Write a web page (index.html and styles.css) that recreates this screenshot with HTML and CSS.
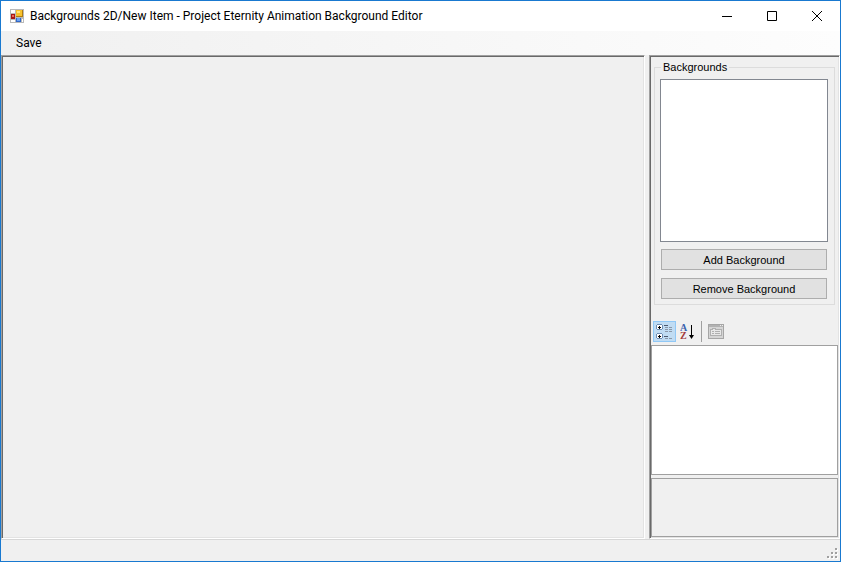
FILE: index.html
```html
<!DOCTYPE html>
<html lang="en">
<head>
<meta charset="utf-8">
<title>Backgrounds 2D/New Item - Project Eternity Animation Background Editor</title>
<link rel="stylesheet" href="styles.css">
</head>
<body>
<div class="window">
  <header class="titlebar">
    <svg class="app-icon" width="14" height="14" viewBox="0 0 14 14" shape-rendering="crispEdges" aria-hidden="true">
      <rect width="14" height="14" fill="#b9b9b9"/>
      <path fill="#fff" d="M1 1h4v3H1zM1 11h4v2H1zM12 10h1v3h-1z"/>
      <rect x="6" y="1" width="7" height="7" fill="#b07c10"/>
      <rect x="6" y="1" width="6" height="6" fill="#f7c22e"/>
      <rect x="7" y="2" width="3" height="2" fill="#ffe57c"/>
      <rect x="1" y="5" width="4" height="5" fill="#a81616"/>
      <rect x="2" y="6" width="2" height="2" fill="#ed6a58"/>
      <rect x="6" y="9" width="5" height="4" fill="#3167c8"/>
      <rect x="7" y="9" width="3" height="3" fill="#6ba2f2"/>
    </svg>
    <h1 class="title">Backgrounds 2D/New Item - Project Eternity Animation Background Editor</h1>
    <button class="caption" aria-label="Minimize"><svg width="10" height="10" viewBox="0 0 10 10"><path d="M0 5.500h10" stroke="#000"/></svg></button>
    <button class="caption" aria-label="Maximize"><svg width="10" height="10" viewBox="0 0 10 10"><path d="M.5.5h9v9h-9z" fill="none" stroke="#000"/></svg></button>
    <button class="caption" aria-label="Close"><svg width="10" height="10" viewBox="0 0 10 10"><path d="M0 0l10 10M10 0L0 10" stroke="#000"/></svg></button>
  </header>
  <nav class="menubar"><button class="menu-item">Save</button></nav>
  <main class="split">
    <section class="panel canvas" aria-label="Preview"></section>
    <aside class="panel sidebar">
      <fieldset class="group">
        <legend>Backgrounds</legend>
        <select class="list" size="8" aria-label="Backgrounds"></select>
        <button class="push">Add Background</button>
        <button class="push">Remove Background</button>
      </fieldset>
      <div class="toolbar">
        <button class="tool selected" aria-label="Categorized">
          <svg width="17" height="17" viewBox="0 0 17 17" shape-rendering="crispEdges">
            <path fill="#fff" stroke="#6f8fb5" d="M1.500 1.500h4l1 1v3l-1 1h-4l-1-1v-3zM1.500 10.500h4l1 1v3l-1 1h-4l-1-1v-3z"/>
            <path stroke="#000" d="M2 4h3M3.500 2.500v3M2 13h3M3.500 11.500v3"/>
            <path stroke="#4b5a70" d="M8 2.500h4M8 13.500h4"/>
            <path stroke="#8a97a8" d="M9 4.500h3M9 6.500h3M9 8.500h3M9 15.500h3M13 4.500h3M13 6.500h3M13 8.500h3M13 15.500h3"/>
          </svg>
        </button>
        <button class="tool" aria-label="Alphabetical">
          <svg width="16" height="17" viewBox="0 0 16 17">
            <text class="letter" x="0" y="8" fill="#3c62ad">A</text>
            <text class="letter" x="0" y="16" fill="#a33b3b">Z</text>
            <path fill="none" stroke="#000" d="M11.500 2v11"/>
            <path d="M9 12h5l-2.500 4z"/>
          </svg>
        </button>
        <span class="separator"></span>
        <button class="tool pages" aria-label="Property Pages" disabled>
          <svg width="16" height="15" viewBox="0 0 16 15" shape-rendering="crispEdges">
            <path fill="#d5d5d5" stroke="#a6a6a6" d="M.5.5h15v14H.5z"/>
            <path fill="#b2b2b2" d="M1 1h14v2H1z"/>
            <path fill="#eee" d="M12 1h1v1h-1zM14 1h1v1h-1z"/>
            <path fill="#e8e8e8" stroke="#b0b0b0" d="M2.500 5.500h2v-1h3v1h6v6h-11z"/>
            <path stroke="#b0b0b0" d="M4 7.500h2M7 7.500h5M4 9.500h2M7 9.500h5"/>
          </svg>
        </button>
      </div>
      <div class="grid-view"></div>
      <div class="help"></div>
    </aside>
  </main>
  <footer class="statusbar">
    <svg width="11" height="11" viewBox="0 0 11 11" shape-rendering="crispEdges" aria-hidden="true">
      <path fill="#fff" d="M9 1h2v2H9zM5 5h2v2H5zM9 5h2v2H9zM1 9h2v2H1zM5 9h2v2H5zM9 9h2v2H9z"/>
      <path fill="#a0a0a0" d="M8 0h2v2H8zM4 4h2v2H4zM8 4h2v2H8zM0 8h2v2H0zM4 8h2v2H4zM8 8h2v2H8z"/>
    </svg>
  </footer>
</div>
</body>
</html>
```
FILE: styles.css
```css
* { box-sizing: border-box; }
body { margin: 0; }
button { margin: 0; padding: 0; border: 0; background: none; color: #000; font: inherit; }
.window {
  display: flex; flex-direction: column; min-height: 100vh;
  border: 1px solid #1979d0; background: #f0f0f0; color: #000;
  font: 12px/16px Roboto, sans-serif;
}
.titlebar { display: flex; align-items: center; height: 30px; padding: 0 1px 0 9px; background: #fff; }
.title { flex: 1; margin: 0 0 0 6px; font: inherit; white-space: nowrap; }
.caption { display: flex; align-items: center; justify-content: center; width: 45px; height: 30px; }
.menubar { display: flex; height: 24px; padding-left: 9px; background: linear-gradient(to right, #f0f0f0, #fdfdfd); }
.menu-item { padding: 0 6px; }
.split { flex: 1; display: flex; gap: 4px; }
.panel {
  border: 1px solid; border-color: #a0a0a0 #fff #fff #a0a0a0;
  box-shadow: inset 1px 1px #696969, inset -1px -1px #e3e3e3;
}
.canvas { flex: 1; }
.sidebar {
  display: flex; flex-direction: column; width: 191px; padding: 1px;
  font: 11px/14px "Liberation Sans", Arial, sans-serif;
}
.group {
  display: flex; flex-direction: column; gap: 8px;
  min-width: 0; margin: 3px 3px 14px; padding: 5px 6px 5px 5px; border: 1px solid #dcdcdc;
}
.group legend { margin: 0 0 0 1px; padding: 0 2px; }
.list { width: 100%; height: 163px; border: 1px solid #828790; border-radius: 0; background: #fff; margin: 0 0 -1px; outline: 0; }
.push { height: 21px; margin: 0 1px; border: 1px solid #adadad; background: #e1e1e1; }
.toolbar { display: flex; align-items: center; height: 25px; margin-bottom: 1px; padding: 0 2px; }
.tool { display: flex; align-items: center; justify-content: center; width: 23px; height: 21px; }
.letter { font: bold 10px "Liberation Serif", serif; }
.selected { border: 1px solid #90c8f6; background: #c0dcf3; }
.separator { width: 1px; height: 21px; margin: 0 2px; background: #a0a0a0; }
.grid-view { flex: 1; min-height: 40px; border: 1px solid #a0a0a0; background: #fff; }
.help { height: 59px; margin-top: 3px; border: 1px solid #a0a0a0; }
.statusbar { display: flex; align-items: flex-end; justify-content: flex-end; height: 22px; padding: 2px; border-top: 1px solid #d7d7d7; }
```
